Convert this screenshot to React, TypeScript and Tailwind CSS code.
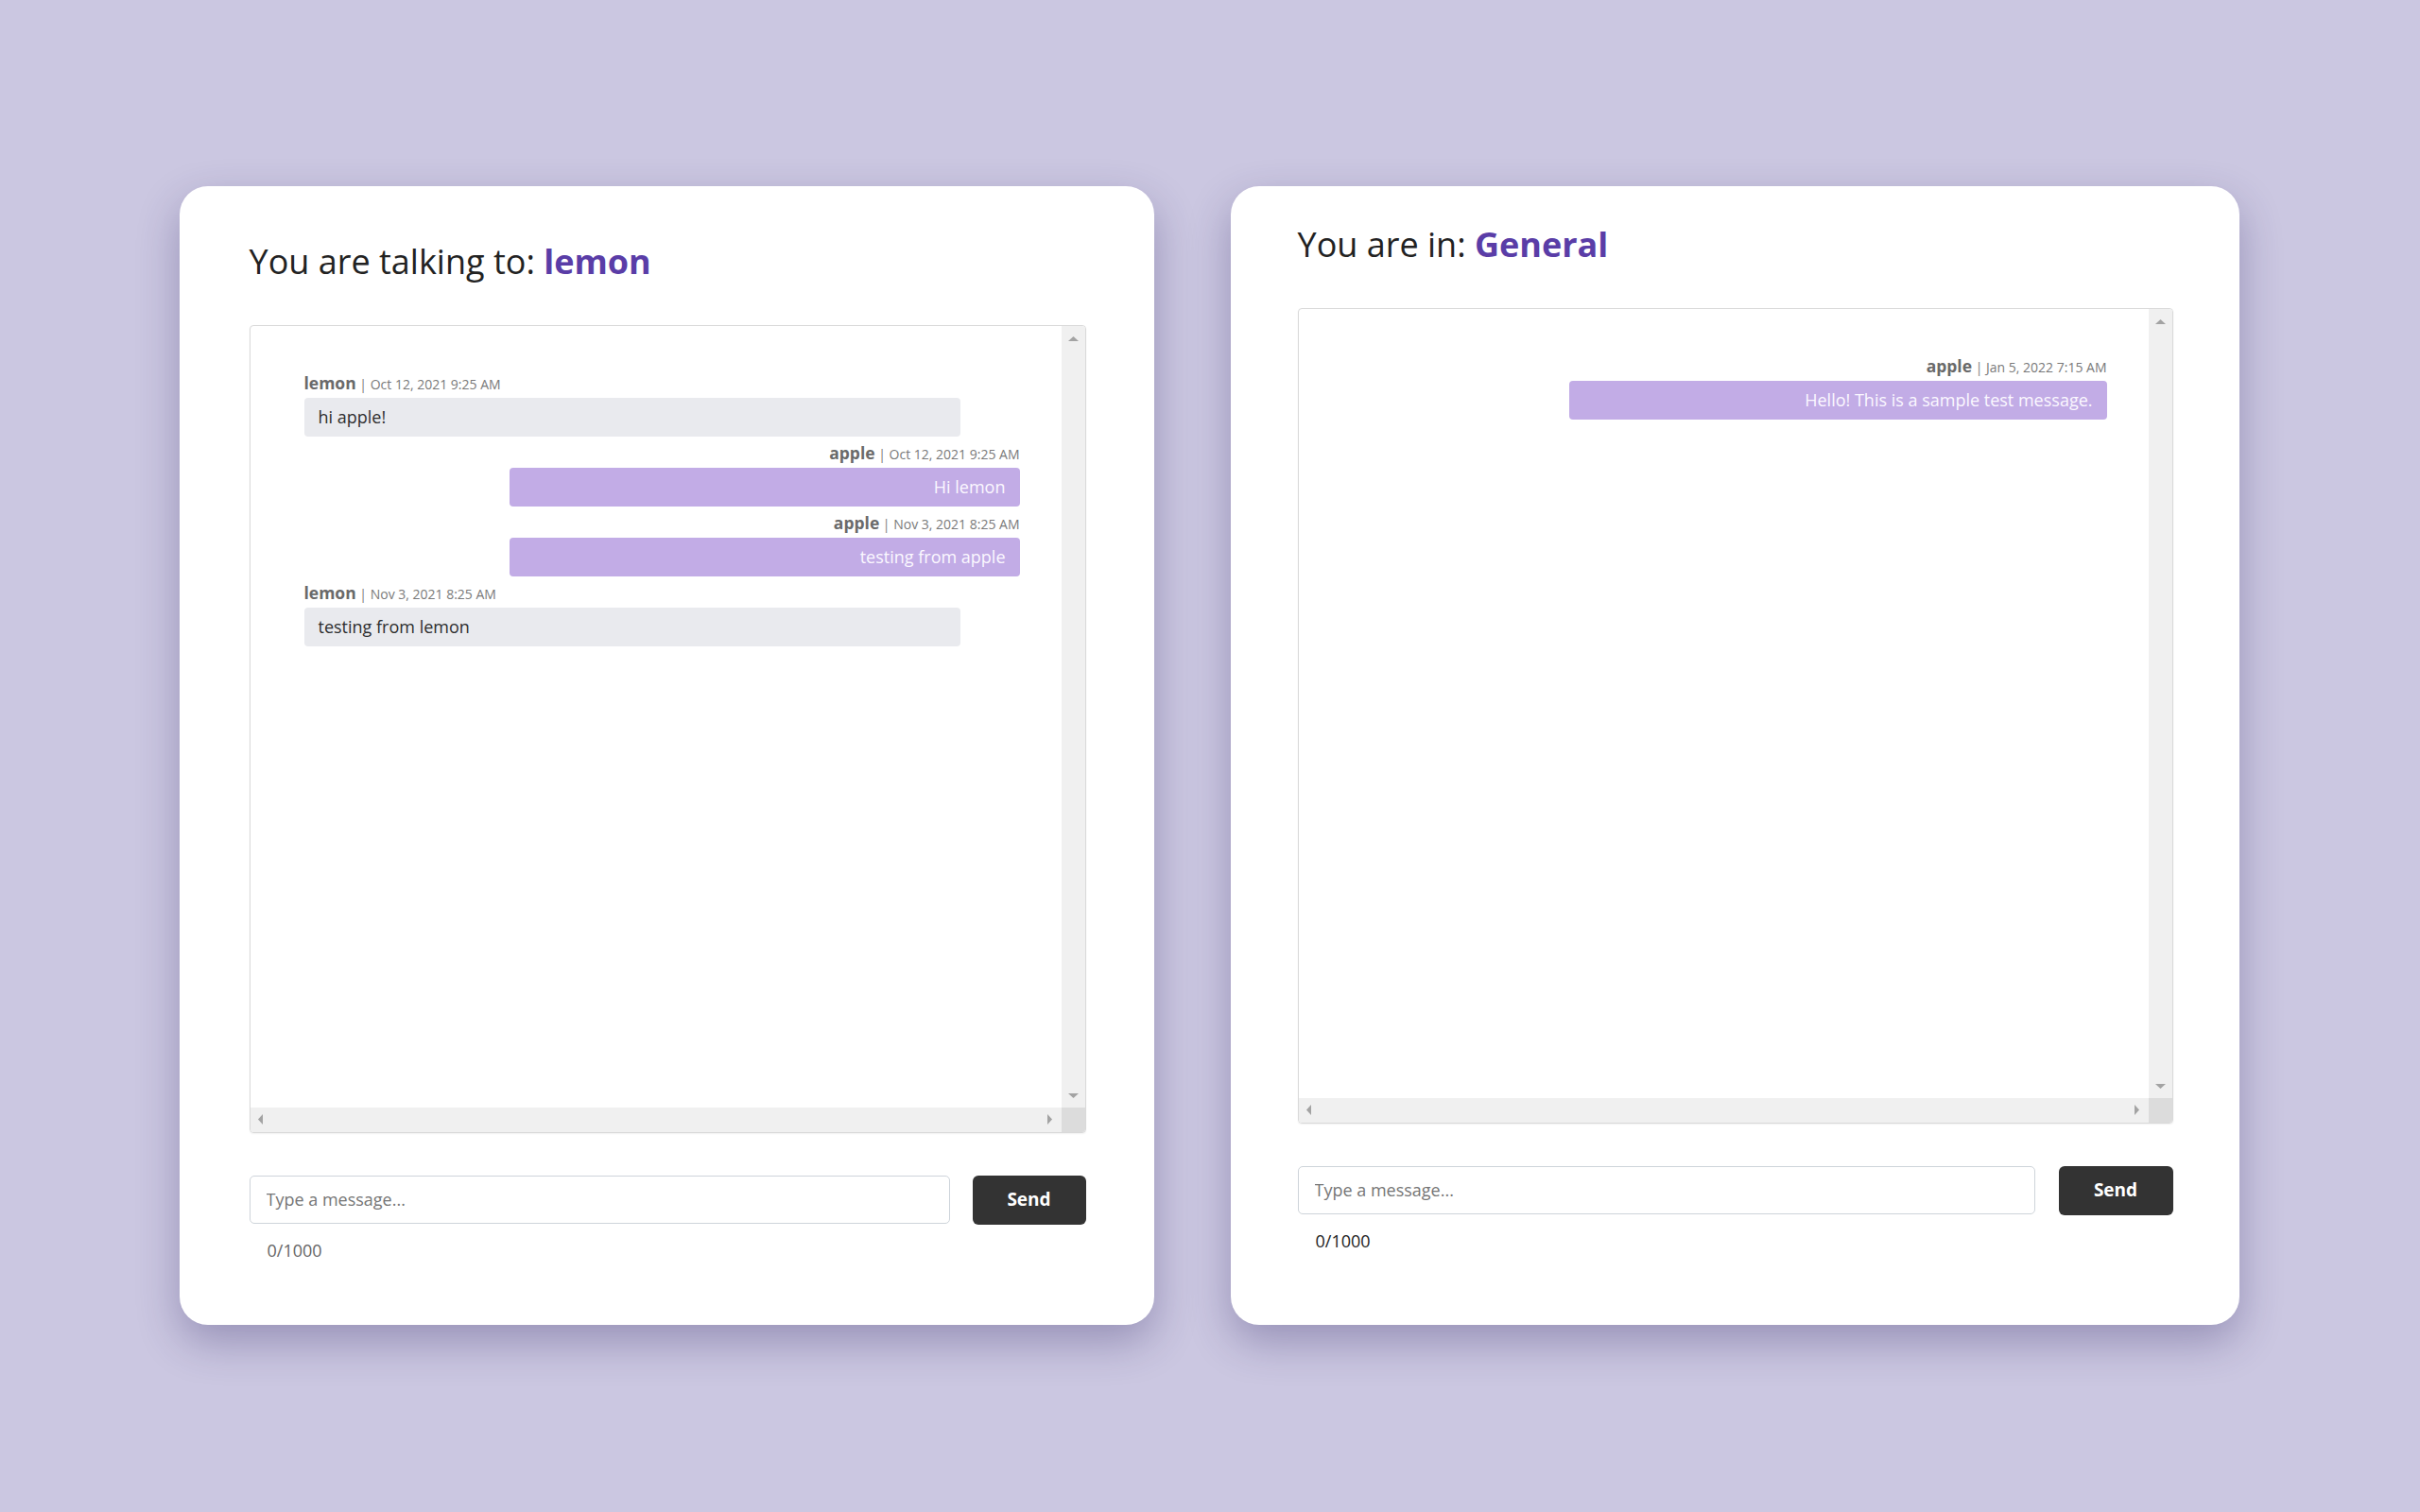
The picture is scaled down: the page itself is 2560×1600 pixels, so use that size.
import React from 'react'

type Message = {
  from: string
  time: string
  text: string
}

const ME = 'apple'

const directMessages: Message[] = [
  { from: 'lemon', time: 'Oct 12, 2021 9:25 AM', text: 'hi apple!' },
  { from: 'apple', time: 'Oct 12, 2021 9:25 AM', text: 'Hi lemon' },
  { from: 'apple', time: 'Nov 3, 2021 8:25 AM', text: 'testing from apple' },
  { from: 'lemon', time: 'Nov 3, 2021 8:25 AM', text: 'testing from lemon' },
]

const roomMessages: Message[] = [
  { from: 'apple', time: 'Jan 5, 2022 7:15 AM', text: 'Hello! This is a sample test message.' },
]

const font = { fontFamily: '"Open Sans", "Noto Sans", sans-serif' }

function Arrow({ dir }: { dir: 'up' | 'down' | 'left' | 'right' }) {
  const points = {
    up: '0,5 5.5,0 11,5',
    down: '0,0 11,0 5.5,5',
    left: '5,0 5,11 0,5.5',
    right: '0,0 5,5.5 0,11',
  }[dir]
  const vertical = dir === 'up' || dir === 'down'
  return (
    <svg
      width={vertical ? 11 : 5}
      height={vertical ? 5 : 11}
      viewBox={vertical ? '0 0 11 5' : '0 0 5 11'}
      className="block"
    >
      <polygon points={points} fill="#a3a3a3" />
    </svg>
  )
}

function MessageRow({ m }: { m: Message }) {
  const own = m.from === ME
  return (
    <div className={`flex flex-col mb-[7px] ${own ? 'items-end' : 'items-start'}`}>
      <div className="leading-[20px] mb-[4px] whitespace-nowrap">
        <span className="text-[17.5px] font-bold text-[#6a6a6a]">{m.from}</span>
        <span className="text-[14px] text-[#7a7a7a]"> | {m.time}</span>
      </div>
      <div
        className={`rounded-[4px] px-[15px] py-[8px] text-[18px] leading-[25px] ${
          own
            ? 'w-[71.3%] bg-[#c2ace6] text-right text-[#fbf8ff]'
            : 'w-[91.8%] bg-[#e9eaee] text-left text-[#2e2e2e]'
        }`}
      >
        {m.text}
      </div>
    </div>
  )
}

function ChatBox({ messages, height }: { messages: Message[]; height: string }) {
  return (
    <div
      className={`${height} mt-[46px] flex flex-col rounded-[4px] border border-[#d9d9d9] shadow-[0_1px_2px_rgba(0,0,0,0.06)] overflow-hidden`}
    >
      <div className="flex flex-1 min-h-0">
        <div className="flex-1 pt-[50px] pl-[57px] pr-[44px]">
          {messages.map((m, i) => (
            <MessageRow key={i} m={m} />
          ))}
        </div>
        {/* vertical scrollbar */}
        <div className="w-[25px] bg-[#f0f0f0] flex flex-col items-center justify-between pt-[11px] pb-[10px]">
          <Arrow dir="up" />
          <Arrow dir="down" />
        </div>
      </div>
      {/* horizontal scrollbar */}
      <div className="h-[26px] flex">
        <div className="flex-1 bg-[#f0f0f0] flex items-center justify-between pl-[8px] pr-[10px]">
          <Arrow dir="left" />
          <Arrow dir="right" />
        </div>
        <div className="w-[25px] bg-[#dcdcdc]" />
      </div>
    </div>
  )
}

function Composer({ gap, buttonWidth, counterColor }: { gap: string; buttonWidth: string; counterColor: string }) {
  return (
    <>
      <div className={`mt-[45px] flex ${gap}`}>
        <input
          type="text"
          placeholder="Type a message..."
          className="flex-1 h-[51px] rounded-[5px] border border-[#ced4da] bg-white px-[17px] text-[18px] text-[#333] placeholder:text-[#767676] outline-none"
          style={font}
        />
        <button
          className={`${buttonWidth} h-[52px] rounded-[6px] bg-[#333333] text-white text-[19px] font-bold`}
          style={font}
        >
          Send
        </button>
      </div>
      <p className={`mt-[15px] pl-[19px] text-[18px] leading-[24px] ${counterColor}`}>0/1000</p>
    </>
  )
}

export default function App() {
  return (
    <div
      className="min-h-screen w-full bg-[#cbc7e1] flex items-center justify-center gap-[81px] pb-[2px] pr-[2px]"
      style={font}
    >
      {/* Direct message */}
      <div className="w-[1031px] h-[1205px] rounded-[30px] bg-white pt-[58px] pl-[74px] pr-[72px] flex flex-col shadow-[0_18px_45px_rgba(45,35,95,0.32)]">
        <h1 className="text-[36px] leading-[43px] text-[#222] font-normal">
          You are talking to: <span className="font-bold text-[#5a3da7]">lemon</span>
        </h1>
        <ChatBox messages={directMessages} height="h-[855px]" />
        <Composer gap="gap-[24px]" buttonWidth="w-[120px]" counterColor="text-[#666]" />
      </div>

      {/* Room */}
      <div className="w-[1067px] h-[1205px] rounded-[30px] bg-white pt-[40px] pl-[71px] pr-[70px] flex flex-col shadow-[0_18px_45px_rgba(45,35,95,0.32)]">
        <h1 className="text-[36px] leading-[43px] text-[#222] font-normal">
          You are in: <span className="font-bold text-[#5a3da7]">General</span>
        </h1>
        <ChatBox messages={roomMessages} height="h-[863px]" />
        <Composer gap="gap-[25px]" buttonWidth="w-[121px]" counterColor="text-[#222]" />
      </div>
    </div>
  )
}
